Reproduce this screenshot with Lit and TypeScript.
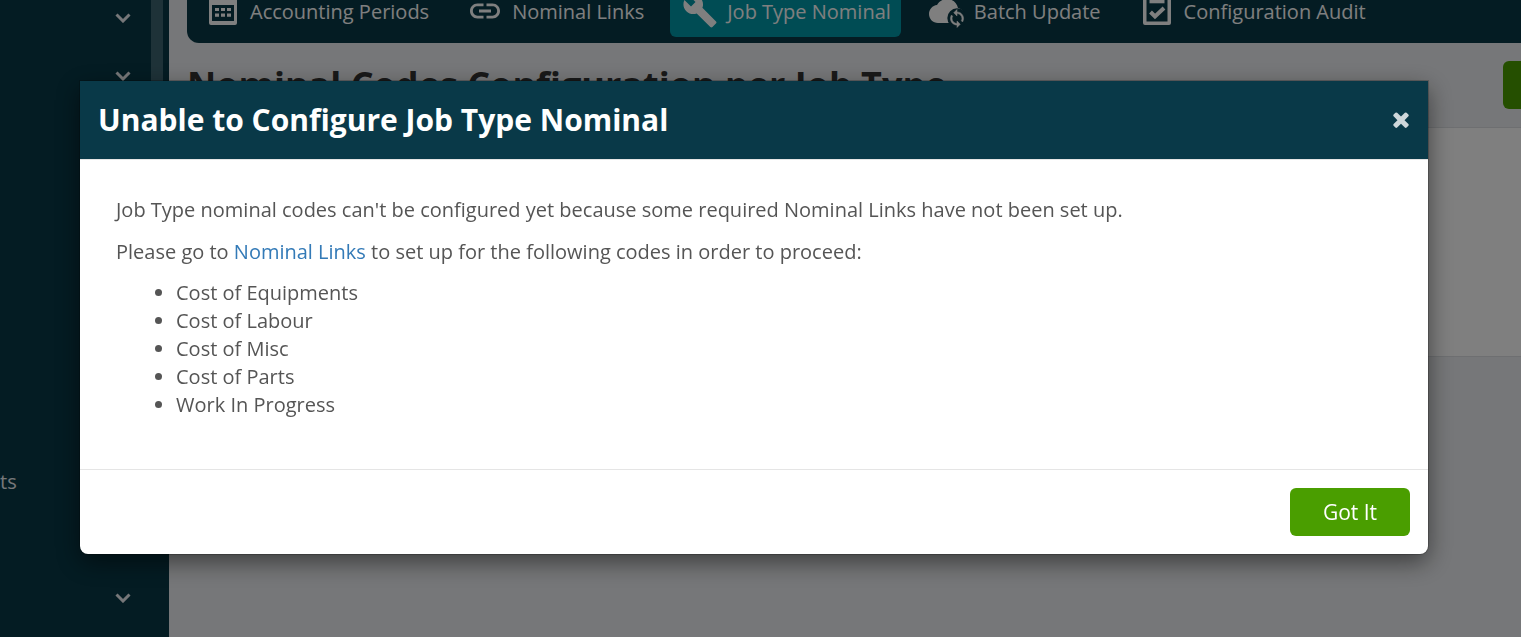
import { LitElement, html, css, svg, nothing } from "lit";
import { customElement, state } from "lit/decorators.js";

const icons = {
  calendar: svg`<svg class="icon" viewBox="0 0 36 36" aria-hidden="true"><path fill-rule="evenodd" d="M6 4h24a2 2 0 0 1 2 2v24a2 2 0 0 1-2 2H6a2 2 0 0 1-2-2V6a2 2 0 0 1 2-2zM7 12v16h22V12zM10 15h4v3h-4zM16 15h4v3h-4zM22 15h4v3h-4zM10 20.5h4v3.3h-4zM16 20.5h4v3.3h-4zM22 20.5h4v3.3h-4z"/></svg>`,
  link: svg`<svg class="icon" viewBox="0 0 24 24" aria-hidden="true"><path d="M3.9 12c0-1.71 1.39-3.1 3.1-3.1h4V7H7c-2.76 0-5 2.24-5 5s2.24 5 5 5h4v-1.9H7c-1.71 0-3.1-1.39-3.1-3.1zM8 13h8v-2H8v2zm9-6h-4v1.9h4c1.71 0 3.1 1.39 3.1 3.1s-1.39 3.1-3.1 3.1h-4V17h4c2.76 0 5-2.24 5-5s-2.24-5-5-5z"/></svg>`,
  wrench: svg`<svg class="icon" viewBox="0 0 24 24" aria-hidden="true"><path d="M22.7 19l-9.1-9.1c.9-2.3.4-5-1.5-6.9-2-2-5-2.4-7.4-1.3L9 6 6 9 1.6 4.7C.4 7.1.9 10.1 2.9 12.1c1.9 1.9 4.6 2.4 6.9 1.5l9.1 9.1c.4.4 1 .4 1.4 0l2.3-2.3c.5-.4.5-1.1.1-1.4z"/></svg>`,
  cloud: svg`<svg class="icon" viewBox="0 0 36 36" aria-hidden="true"><path d="M29 15C28 9.900 23.500 6 18 6 13.700 6 9.900 8.500 8 12 3.500 12.500 0 16.400 0 21c0 5 4 9 9 9h19c5 0 7-4 7-7 0-4-2-7-6-8z"/><circle class="cut" cx="28" cy="25" r="9.700"/><path class="sync" transform="translate(28 25.500) scale(.82) translate(-12 -12)" d="M12 4V1L8 5l4 4V6c3.31 0 6 2.69 6 6 0 1.01-.25 1.97-.7 2.8l1.46 1.46C19.54 15.03 20 13.57 20 12c0-4.42-3.58-8-8-8zm0 14c-3.31 0-6-2.69-6-6 0-1.01.25-1.97.7-2.8L5.24 7.74C4.46 8.97 4 10.43 4 12c0 4.42 3.58 8 8 8v3l4-4-4-4v3z"/></svg>`,
  clipboard: svg`<svg class="icon" viewBox="0 0 36 36" aria-hidden="true"><path fill-rule="evenodd" d="M6 4h24a2 2 0 0 1 2 2v24a2 2 0 0 1-2 2H6a2 2 0 0 1-2-2V6a2 2 0 0 1 2-2zM7.500 7v21.500h21V7z"/><path d="M10.500 4h15v6.300h-15z"/><path class="check" d="M11.500 19l4.500 4.500 9-8.500"/></svg>`,
};

const chevron = svg`<svg class="chevron" viewBox="0 0 16 10" aria-hidden="true"><path d="M1.500 1.500L8 8l6.500-6.500"/></svg>`;

const tabs = [
  { label: "Accounting Periods", icon: icons.calendar },
  { label: "Nominal Links", icon: icons.link },
  { label: "Job Type Nominal", icon: icons.wrench, active: true },
  { label: "Batch Update", icon: icons.cloud },
  { label: "Configuration Audit", icon: icons.clipboard },
];

const menuRows = ["", "", "", "", "", "", "", "", "ts", "", ""];

const missingCodes = [
  "Cost of Equipments",
  "Cost of Labour",
  "Cost of Misc",
  "Cost of Parts",
  "Work In Progress",
];

@customElement("app-root")
export class AppRoot extends LitElement {
  @state() private open = true;

  static styles = css`
    :host {
      display: block;
      height: 100vh;
      overflow: hidden;
      font-family: "Open Sans", "Noto Sans", sans-serif;
      font-size: 20px;
      line-height: 28px;
      color: #555;
    }
    * { box-sizing: border-box; }
    button { font: inherit; border: 0; cursor: pointer; }
    a { text-decoration: none; }
    .shell {
      display: grid;
      grid-template-columns: 169px minmax(0, 1fr);
      height: 100%;
    }
    .sidebar {
      display: flex;
      background: #083846;
      overflow: hidden;
    }
    .menu {
      flex: 1;
      margin: -11px 0 0;
      padding: 0;
      list-style: none;
    }
    .row {
      display: flex;
      align-items: center;
      justify-content: space-between;
      height: 58px;
      padding-right: 20px;
      color: #edeff2;
    }
    .row a { color: inherit; }
    .toggle {
      display: flex;
      margin-left: auto;
      padding: 0;
      background: none;
    }
    .chevron {
      width: 16px;
      height: 10px;
      fill: none;
      stroke: #edeff2;
      stroke-width: 3;
    }
    .thumb {
      width: 12px;
      height: 50%;
      margin-right: 6px;
      background: #3d6571;
    }
    .main { background: #edeff2; overflow: hidden; }
    .tabs {
      display: flex;
      gap: 16px;
      height: 43px;
      margin-left: 18px;
      padding: 0 6px 6px;
      align-items: flex-end;
      background: #083846;
      border-bottom-left-radius: 12px;
    }
    .tab {
      display: flex;
      flex: none;
      align-items: center;
      gap: 9px;
      height: 50px;
      padding: 0 10px 0 12px;
      border-radius: 6px;
      color: #fff;
    }
    .active { background: #0099a8; }
    .icon { width: 36px; height: 36px; margin-bottom: 2px; fill: currentColor; }
    .cut { fill: #083846; }
    .sync { stroke: currentColor; stroke-width: 0.6; }
    .check { fill: none; stroke: currentColor; stroke-width: 4; }
    .heading {
      display: flex;
      align-items: center;
      justify-content: space-between;
      height: 84px;
      padding-left: 18px;
    }
    h1 {
      margin: 0;
      font-size: 36px;
      line-height: 48px;
      font-weight: 700;
      color: #333;
    }
    .primary {
      width: 120px;
      height: 48px;
      border-radius: 6px;
      background: #4a9e00;
      color: #fff;
      font-size: 21px;
    }
    .heading .primary { flex: none; margin-right: -102px; }
    .panel {
      height: 230px;
      background: #fff;
      border: 1px solid #dcdfe3;
      border-width: 1px 0;
    }
    .overlay {
      position: fixed;
      inset: 0;
      padding: 81px 93px 0 80px;
      background: rgba(0, 0, 0, 0.5);
    }
    .dialog {
      background: #fff;
      border-radius: 0 0 8px 8px;
      box-shadow: 0 0 0 1px rgba(0, 0, 0, 0.2), 0 8px 24px rgba(0, 0, 0, 0.5);
    }
    .dialog header {
      display: flex;
      align-items: center;
      justify-content: space-between;
      height: 79px;
      padding: 0 18px;
      background: #093948;
      border-bottom: 1px solid #e5e5e5;
    }
    h2 {
      margin: 0;
      font-size: 30px;
      line-height: 42px;
      font-weight: 700;
      color: #fff;
    }
    .close {
      display: flex;
      padding: 0;
      background: none;
    }
    .close svg { width: 18px; height: 18px; fill: #ced7da; }
    .body { padding: 36px; }
    .body p { margin: 0 0 14px; }
    .body p + p { margin-bottom: 13px; }
    .body a { color: #337ab7; }
    .codes { margin: 0 0 14px; padding-left: 60px; }
    footer {
      display: flex;
      justify-content: flex-end;
      padding: 18px;
      border-top: 1px solid #e5e5e5;
    }
  `;

  private close() {
    this.open = false;
  }

  private renderDialog() {
    return html`
      <div class="overlay">
        <section class="dialog" role="dialog" aria-modal="true" aria-labelledby="dialog-title">
          <header>
            <h2 id="dialog-title">Unable to Configure Job Type Nominal</h2>
            <button class="close" aria-label="Close" @click=${this.close}>
              <svg viewBox="206 260 1380 1380" aria-hidden="true"><path d="M1490 1322q0 40-28 68l-136 136q-28 28-68 28t-68-28l-294-294-294 294q-28 28-68 28t-68-28l-136-136q-28-28-28-68t28-68l294-294-294-294q-28-28-28-68t28-68l136-136q28-28 68-28t68 28l294 294 294-294q28-28 68-28t68 28l136 136q28 28 28 68t-28 68l-294 294 294 294q28 28 28 68z"/></svg>
            </button>
          </header>
          <div class="body">
            <p>Job Type nominal codes can't be configured yet because some required Nominal Links have not been set up.</p>
            <p>Please go to <a href="#nominal-links">Nominal Links</a> to set up for the following codes in order to proceed:</p>
            <ul class="codes">
              ${missingCodes.map((code) => html`<li>${code}</li>`)}
            </ul>
          </div>
          <footer>
            <button class="primary" @click=${this.close}>Got It</button>
          </footer>
        </section>
      </div>
    `;
  }

  render() {
    return html`
      <div class="shell">
        <aside class="sidebar">
          <ul class="menu">
            ${menuRows.map((label) => html`
              <li class="row">
                ${label
                  ? html`<a href="#section">${label}</a>`
                  : html`<button class="toggle" aria-label="Expand section">${chevron}</button>`}
              </li>
            `)}
          </ul>
          <div class="thumb"></div>
        </aside>
        <main class="main">
          <nav class="tabs">
            ${tabs.map((tab) => html`
              <a class="tab ${tab.active ? "active" : ""}" href="#tab" aria-current=${tab.active ? "page" : nothing}>
                ${tab.icon}<span>${tab.label}</span>
              </a>
            `)}
          </nav>
          <div class="heading">
            <h1>Nominal Codes Configuration per Job Type</h1>
            <button class="primary" aria-label="Save"></button>
          </div>
          <div class="panel"></div>
        </main>
      </div>
      ${this.open ? this.renderDialog() : nothing}
    `;
  }
}
